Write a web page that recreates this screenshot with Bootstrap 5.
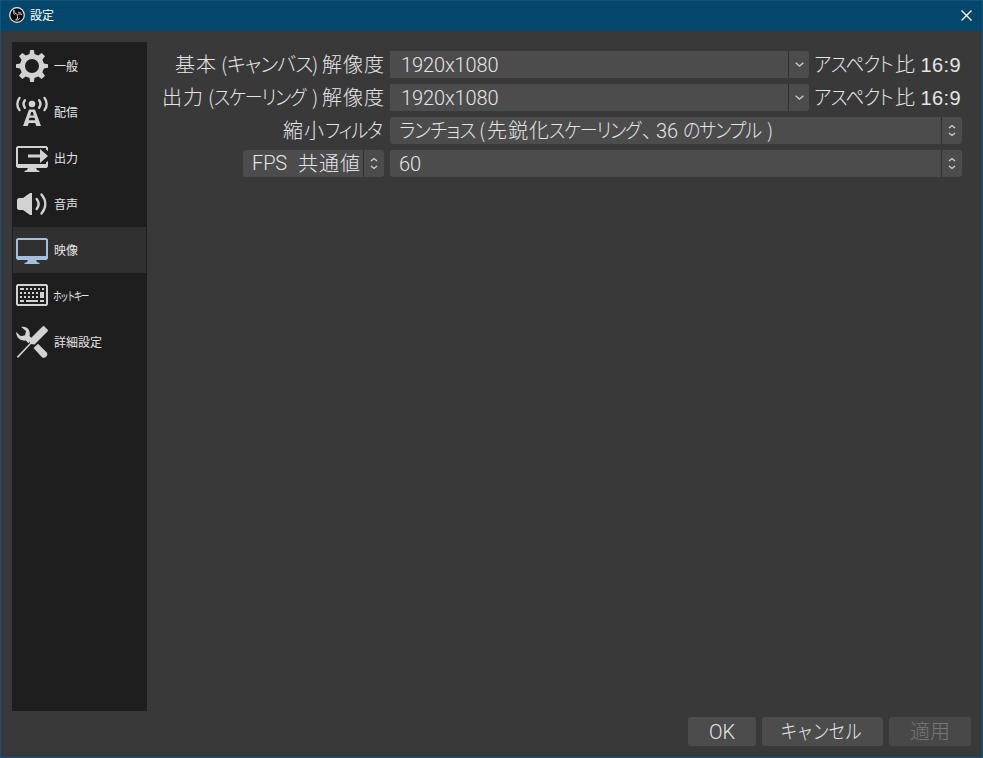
<!DOCTYPE html>
<html lang="ja">
<head>
<meta charset="utf-8">
<meta name="viewport" content="width=device-width, initial-scale=1">
<title>設定</title>
<link href="https://cdn.jsdelivr.net/npm/bootstrap@5.3.0/dist/css/bootstrap.min.css" rel="stylesheet">
<style>
body{width:983px;height:758px;overflow:hidden;background:#3a393a;color:#e6e5e6;font-family:"Noto Sans CJK JP",sans-serif;font-size:20px;font-weight:300;line-height:26px;font-feature-settings:"palt"}
.window{height:758px;border:1px solid #0f5581;border-top:0}
.titlebar{height:31px;background:#05476c;color:#fff;font-size:12px;line-height:16px;padding:0 10px 2px 8px;font-weight:400;border-top:1px solid #10527b}
.title-text{margin-left:5px}
.content-area{padding:11px 20px 0 11px}
.side{width:135px;height:669px;background:#1f1e1f;padding:1px}
.side-item{height:46px;padding:0 3px;gap:6px;font-size:12px;line-height:16px;font-weight:400;font-feature-settings:normal}
.side-item.active{background:#303030}
.side-item svg{width:32px;height:36px;flex:none;fill:#d2d2d2}
.side-item.active svg{fill:#a3bfdc}
.side-item .wave{fill:none;stroke:#d2d2d2;stroke-width:2.4;stroke-linecap:round}
.half{letter-spacing:-2.4px;margin-left:-1px;transform:scaleX(.72);transform-origin:0 50%}
.settings{display:grid;grid-template-columns:237px 572px;gap:6px;margin-top:9px;align-content:start}
.settings>div{height:27px;white-space:nowrap}
.field{background:#4c4c4c;height:27px;padding-left:9px;border-radius:3px 0 0 3px}
.field.square{border-radius:0;padding-left:11px;flex:0 0 398px}
.arrow{width:21px;height:27px;border-left:1px solid #303030;background:#4c4c4c;border-radius:0 3px 3px 0}
.arrow svg{fill:none;stroke:#d2d2d2;stroke-width:1.3}
.fps{width:141px}
.fps .kj{padding-right:2px}
.latin{font-family:Roboto,sans-serif;font-weight:300;letter-spacing:-.1px}
.aspect-value{font-family:"Liberation Sans",sans-serif;font-weight:400;letter-spacing:.4px;line-height:28px;margin-right:1px}
.aspect{margin-left:5px}
.kj{letter-spacing:1px}
.seg{display:inline-block;white-space:nowrap;text-align:left}
.narrow{letter-spacing:-1.2px;transform:scaleX(.9);transform-origin:0 50%}
.wider{transform:scaleX(.935);transform-origin:0 50%}
.narrow-btn{display:inline-block;letter-spacing:-1px;transform:translateX(-2px) scaleX(.85)}
.tight{letter-spacing:-.9px}
.w6{width:6px}.w8{width:8px}.w10{width:10px}.w27{width:27px}.w46{width:46px}.w59{width:59px}.w62{width:62px}.w80{width:80px}.w81{width:81px}.w84{width:84px}.w85{width:85px}.w93{width:93px}.w98{width:98px}
.footer-btns{padding:0 11px 11px;gap:6px}
.dlg-btn{height:29px;line-height:26px;padding:1px 0 2px;border:0;background:#4c4c4c;color:#e6e5e6;border-radius:3px;font-size:20px;font-weight:300}
.dlg-btn:disabled{background:#484848;color:#777;opacity:1}
.b-ok{width:68px}.b-cancel{width:121px}.b-apply{width:82px}
</style>
</head>
<body>
<div class="window d-flex flex-column">
  <header class="titlebar d-flex align-items-center flex-shrink-0">
    <svg width="16" height="16" viewBox="0 0 16 16"><circle cx="8" cy="8" r="7.3" fill="#0b0b0d" stroke="#e8e8e8" stroke-width="1.2"/><path d="M5 3.2c.2 2 1.300 3.600 3.200 4.100M12.800 7.800c-1.600-1.400-3.400-1-4.600.2M6.500 13c2-.8 2.600-2.800 1.700-4.800M5 3.200c-.8 1.500-.5 3.200.6 4.400M12.800 7.800c-.6-1.800-2-2.700-3.700-2.600M6.500 13c1.700.3 3.300-.4 4.200-1.800" fill="none" stroke="#e8e8e8" stroke-width=".9"/></svg>
    <span class="title-text me-auto">設定</span>
    <svg width="11" height="11" viewBox="0 0 11 11"><path d="M.5.500l10 10M10.500.500l-10 10" stroke="#fff" stroke-width="1.300"/></svg>
  </header>
  <main class="content-area d-flex flex-grow-1">
    <nav class="side flex-shrink-0">
      <div class="side-item d-flex align-items-center">
        <svg viewBox="0 0 32 36"><path fill-rule="evenodd" d="M13.500 6.100L14.200 2h3.600l.7 4.100 3.700 1.500 3.500-2.600 3.300 3.300-2.600 3.500 1.500 3.700 4.100.7v3.600l-4.100.7-1.500 3.700 2.600 3.500-3.300 3.300-3.500-2.600-3.700 1.500-.7 4.100h-3.600l-.7-4.100-3.700-1.500-3.500 2.600L3 27.700l2.600-3.500-1.500-3.700-4.100-.7v-3.600l4.100-.7 1.500-3.700L3 8.300 6.300 5l3.500 2.600zM16 11a7 7 0 1 0 0 14 7 7 0 0 0 0-14z"/></svg><span>一般</span></div>
      <div class="side-item d-flex align-items-center">
        <svg viewBox="0 0 32 36"><circle cx="16" cy="10" r="3.300"/><path class="wave" d="M3.500 4C.6 7.500.6 12.500 3.500 16M28.500 4c2.900 3.500 2.900 8.500 0 12M8.900 6.300c-1.700 2.300-1.700 5.100 0 7.400M23.100 6.300c1.700 2.300 1.700 5.100 0 7.400"/><path fill-rule="evenodd" d="M13 15.500h6L25 32h-4.800l-1-3h-6.400l-1 3H7zM15.200 18l-1.100 3.500h3.800L16.800 18zM13.500 23.800l-.8 2.400h6.600l-.8-2.400z"/></svg><span>配信</span></div>
      <div class="side-item d-flex align-items-center">
        <svg viewBox="0 0 32 36"><path d="M1.500 6h29L32 7.500V11l-2-1.500V8H2v16h28v-1.500l2-1.500v5.500L30.500 28H20l1 2 2.500 1v1h-15v-1l2.500-1 1-2H1.500L0 26.500v-19z"/><path d="M12 14.500h12V9l8 7-8 7v-5.500H12z"/></svg><span>出力</span></div>
      <div class="side-item d-flex align-items-center">
        <svg viewBox="0 0 32 36"><path d="M1 13.500L2.500 12H7l7-5h2v22h-2l-7-5H2.500L1 22.500z"/><path class="wave" d="M20.700 13c2.500 3.200 2.500 6.800 0 10M25.500 8.500c5 6 5 13 0 19"/></svg><span>音声</span></div>
      <div class="side-item active d-flex align-items-center">
        <svg viewBox="0 0 32 36"><path fill-rule="evenodd" d="M1.500 6h29L32 7.500v19L30.500 28H20l1 2 2.500 1v1h-15v-1l2.500-1 1-2H1.500L0 26.500v-19zM2 8v16h28V8z"/></svg><span>映像</span></div>
      <div class="side-item d-flex align-items-center">
        <svg viewBox="0 0 32 36"><path fill-rule="evenodd" d="M1.500 6h29L32 7.500v19L30.500 28h-29L0 26.500v-19zM2 8v18h28V8z"/><path d="M4 10h4v2H4zM10 10h2v2h-2zM14 10h2v2h-2zM18 10h2v2h-2zM22 10h2v2h-2zM26 10h2v2h-2zM4 14h2v2H4zM8 14h2v2H8zM12 14h2v2h-2zM16 14h2v2h-2zM20 14h2v2h-2zM24 14h4v6h-4zM4 18h2v2H4zM8 18h2v2H8zM12 18h2v2h-2zM16 18h2v2h-2zM20 18h2v2h-2zM4 22h4v2H4zM10 22h12v2H10zM24 22h4v2h-4z"/></svg><span class="half">ホットキー</span></div>
      <div class="side-item d-flex align-items-center">
        <svg viewBox="0 0 32 36"><path d="M5.200 3C10 1.700 14.500 5.500 13.700 10.300l-.2 1.700 3 3-4 4.200-2.700-2.700C4.500 17.500-.2 13.200.2 8l4.600 4.200 4.200-1L10 7z"/><path d="M26.500 2.500q1-.8 2 0l3 3q.8 1 0 2L18.500 20.500 15 20 2.500 33.500H1V32.500L14 19l-.5-3.500z"/><path d="M17.500 24l4.500-4.200 8.500 8.500c2.500 3-1.500 7-4.500 5z"/></svg><span>詳細設定</span></div>
    </nav>
    <section class="settings">
      <div class="text-end"><span class="seg kj w46">基本</span><span class="seg w6">(</span><span class="seg tight w85">キャンバス</span><span class="seg w10">)</span><span class="seg kj w62">解像度</span></div>
      <div class="d-flex"><div class="field square"><span class="latin">1920x1080</span></div><div class="arrow flex-shrink-0 d-flex align-items-center justify-content-center"><svg width="9" height="6" viewBox="0 0 9 6"><path d="M.7.700l3.800 3.500L8.300.700"/></svg></div><span class="aspect seg tight wider w81">アスペクト</span><span>比</span><span class="aspect-value ms-auto">16:9</span></div>
      <div class="text-end"><span class="seg kj w46">出力</span><span class="seg w6">(</span><span class="seg narrow w98">スケーリング</span><span class="seg w10">)</span><span class="seg kj w62">解像度</span></div>
      <div class="d-flex"><div class="field square"><span class="latin">1920x1080</span></div><div class="arrow flex-shrink-0 d-flex align-items-center justify-content-center"><svg width="9" height="6" viewBox="0 0 9 6"><path d="M.7.700l3.800 3.500L8.300.700"/></svg></div><span class="aspect seg tight wider w81">アスペクト</span><span>比</span><span class="aspect-value ms-auto">16:9</span></div>
      <div class="text-end"><span class="kj">縮小</span><span class="seg narrow w59">フィルタ</span></div>
      <div class="d-flex"><div class="field flex-grow-1"><span class="seg tight wider w80">ランチョス</span><span class="seg w8">(</span><span class="seg kj w62">先鋭化</span><span class="seg narrow w93">スケーリング</span><span class="seg w10">、</span><span class="seg latin ps-1 w27">36</span><span class="seg narrow w84 ms-1">のサンプル</span><span>)</span></div><div class="arrow d-flex align-items-center justify-content-center"><svg width="8" height="13" viewBox="0 0 8 13"><path d="M1 4l3-2.500L7 4M1 9l3 2.500L7 9"/></svg></div></div>
      <div class="d-flex justify-content-end"><div class="fps d-flex"><div class="field flex-grow-1 d-flex"><span class="latin me-auto">FPS</span><span class="kj">共通値</span></div><div class="arrow d-flex align-items-center justify-content-center"><svg width="8" height="13" viewBox="0 0 8 13"><path d="M1 4l3-2.500L7 4M1 9l3 2.500L7 9"/></svg></div></div></div>
      <div class="d-flex"><div class="field flex-grow-1"><span class="latin">60</span></div><div class="arrow d-flex align-items-center justify-content-center"><svg width="8" height="13" viewBox="0 0 8 13"><path d="M1 4l3-2.500L7 4M1 9l3 2.500L7 9"/></svg></div></div>
    </section>
  </main>
  <footer class="footer-btns d-flex justify-content-end">
    <button type="button" class="btn dlg-btn b-ok"><span class="latin">OK</span></button>
    <button type="button" class="btn dlg-btn b-cancel"><span class="narrow-btn">キャンセル</span></button>
    <button type="button" class="btn dlg-btn b-apply" disabled>適用</button>
  </footer>
</div>
<script src="https://cdn.jsdelivr.net/npm/bootstrap@5.3.0/dist/js/bootstrap.bundle.min.js"></script>
</body>
</html>
